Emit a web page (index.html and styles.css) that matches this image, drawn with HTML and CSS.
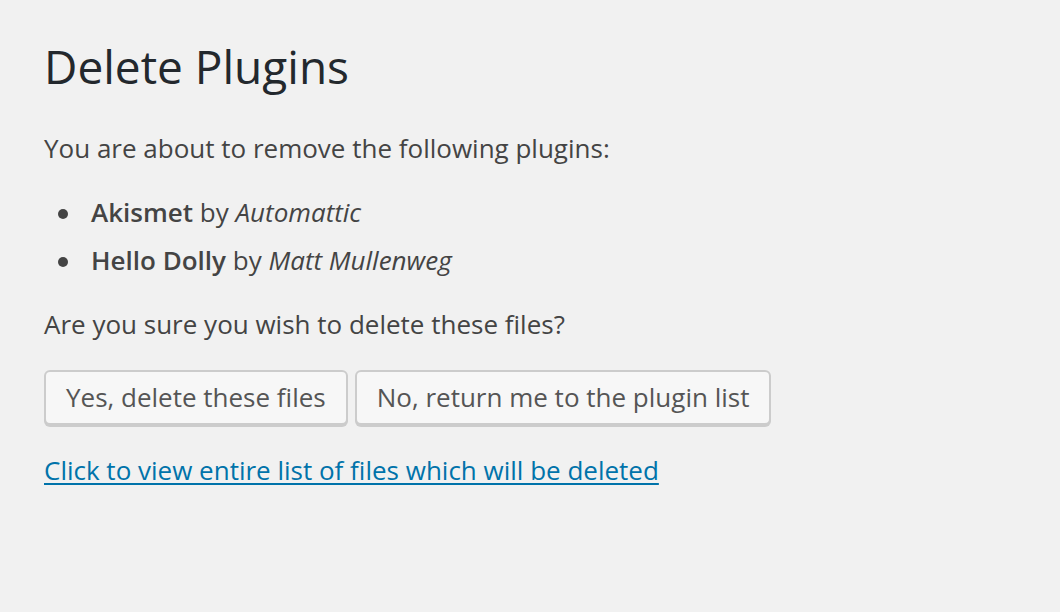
FILE: index.html
```html
<!DOCTYPE html>
<html lang="en">
<head>
<meta charset="utf-8">
<title>Delete Plugins</title>
<link rel="stylesheet" href="styles.css">
</head>
<body>
<div class="wrap">
  <h1 class="title">Delete Plugins</h1>
  <p class="text">You are about to remove the following plugins:</p>
  <ul class="plugins">
    <li class="plugin"><strong>Akismet</strong> by <em>Automattic</em></li>
    <li class="plugin"><strong>Hello Dolly</strong> by <em>Matt Mullenweg</em></li>
  </ul>
  <p class="text">Are you sure you wish to delete these files?</p>
  <div class="actions">
    <button class="button" type="button">Yes, delete these files</button>
    <button class="button" type="button">No, return me to the plugin list</button>
  </div>
  <p class="text"><a class="files-link" href="#">Click to view entire list of files which will be deleted</a></p>
</div>
</body>
</html>
```
FILE: styles.css
```css
html, body {
  margin: 0;
  padding: 0;
  background: #f1f1f1;
}
body {
  font-family: "Open Sans", "Noto Sans", sans-serif;
  font-size: 26px;
  line-height: 1.4;
  color: #444;
  height: 612px;
  overflow: hidden;
}
.wrap {
  padding: 19px 40px 0 44px;
}
.title {
  margin: 0;
  padding: 18px 0 8px;
  font-size: 46px;
  font-weight: 400;
  line-height: 58px;
  color: #23282d;
}
.text {
  margin: 26px 0;
  line-height: 1.5;
}
.plugins {
  margin: 0 0 0 47px;
  padding: 0;
  list-style: none;
}
.plugin {
  position: relative;
  margin-bottom: 12px;
}
.plugin::before {
  content: "";
  position: absolute;
  left: -33px;
  top: 15px;
  width: 10px;
  height: 10px;
  border-radius: 50%;
  background: #444;
}
.plugin strong {
  font-weight: 600;
}
.actions {
  display: flex;
  gap: 7px;
}
.button {
  box-sizing: border-box;
  height: 55px;
  margin: 0;
  padding: 0 20px 2px;
  font-family: inherit;
  font-size: 26px;
  line-height: 51px;
  color: #555;
  background: #f7f7f7;
  border: 2px solid #ccc;
  border-radius: 6px;
  box-shadow: 0 2px 0 #ccc;
  cursor: pointer;
  white-space: nowrap;
}
.files-link {
  color: #0073aa;
  text-decoration: underline;
  text-underline-offset: 3px;
}
```
